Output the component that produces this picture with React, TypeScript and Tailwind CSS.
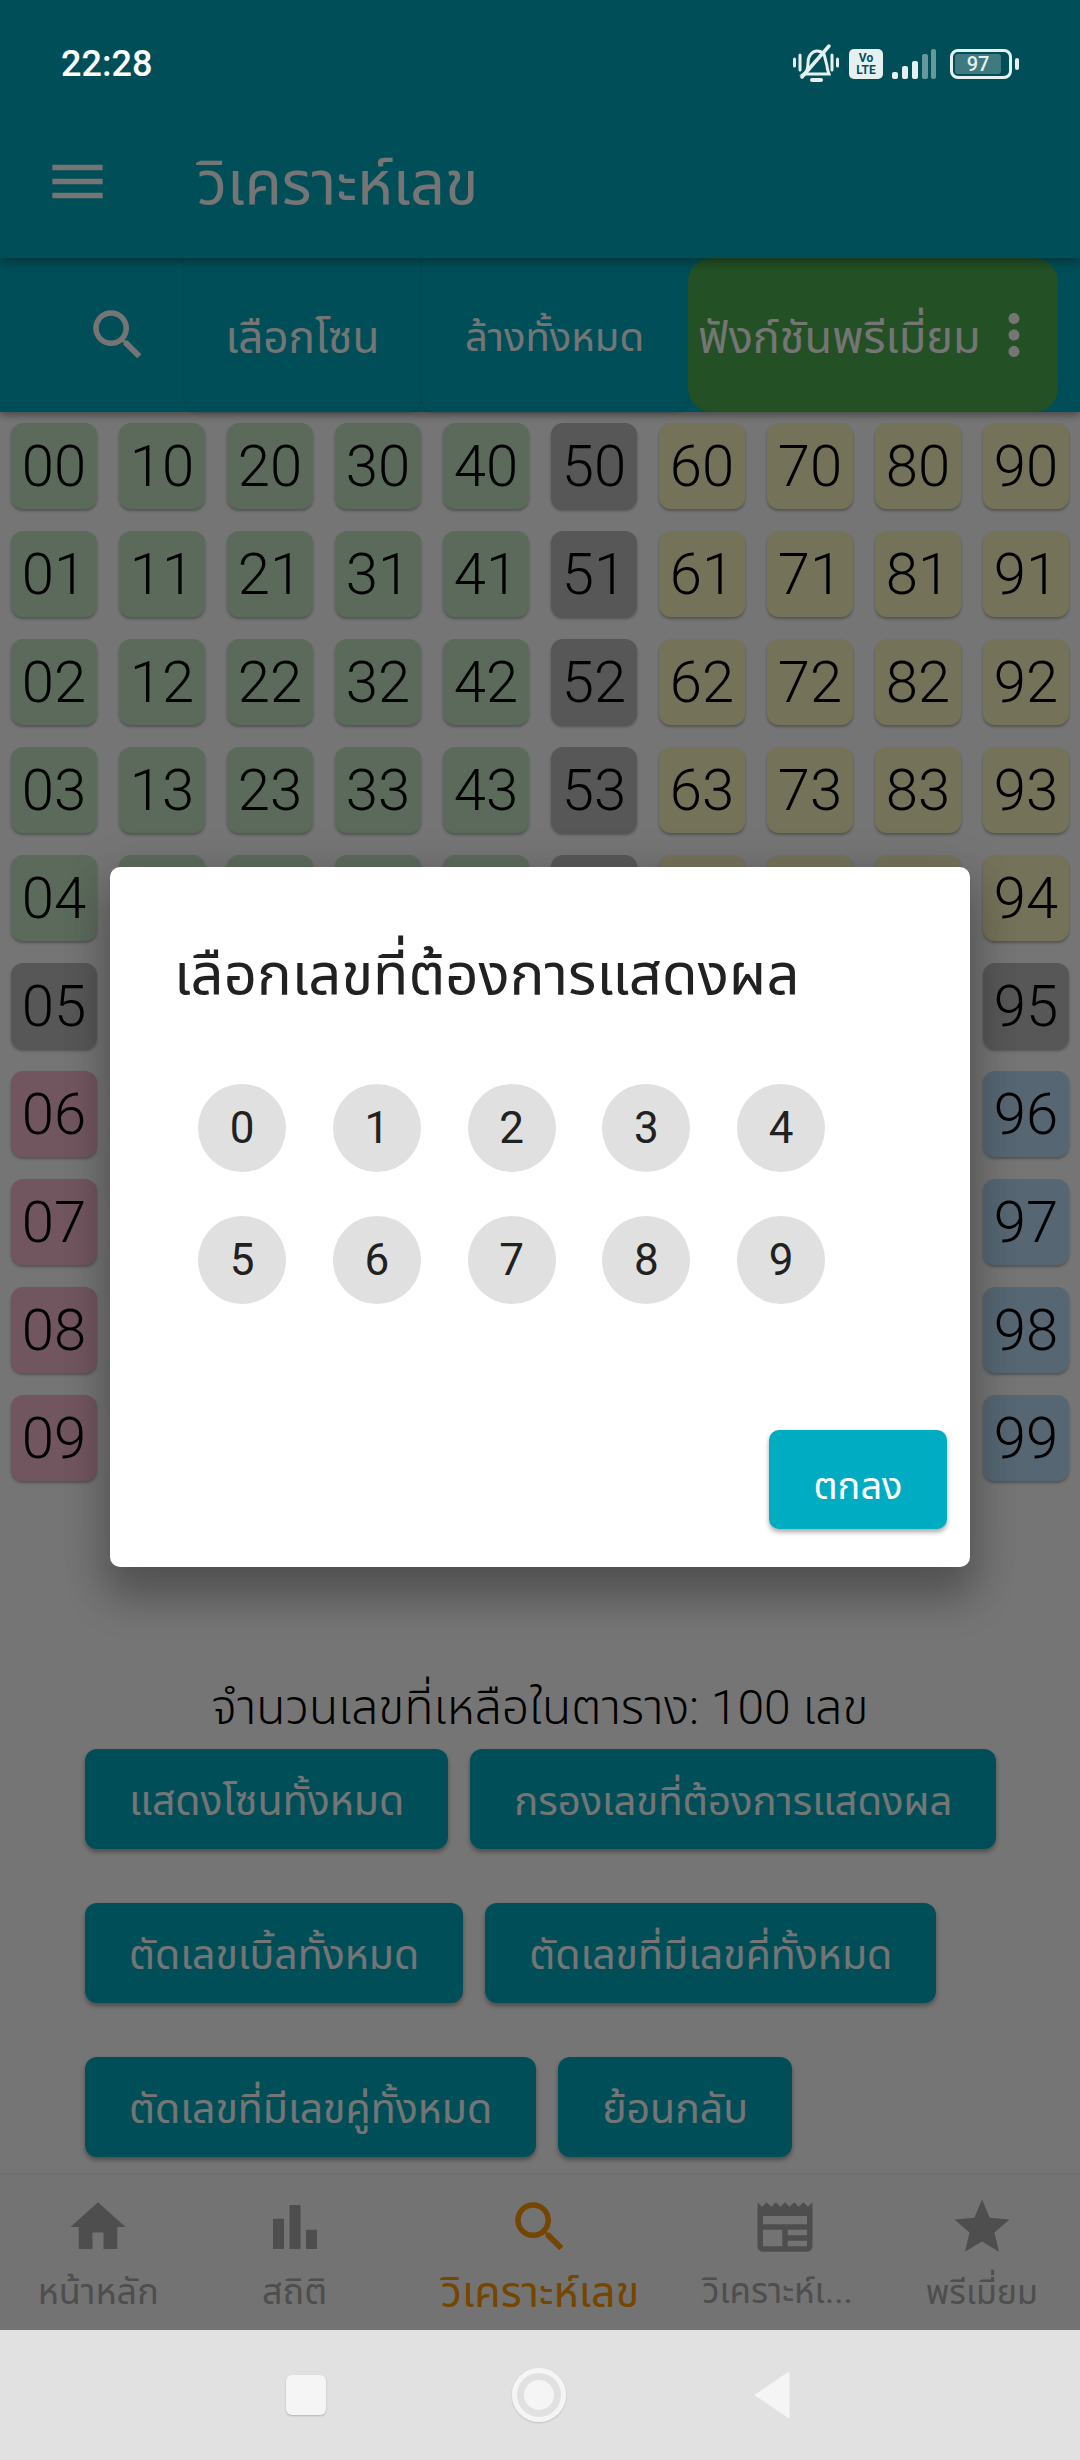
import { MdHome, MdMenu, MdMoreVert, MdSearch, MdStar } from "react-icons/md";

const FONT = "font-['Roboto','Noto_Sans_Thai','Noto_Sans','DejaVu_Sans',sans-serif]";

const cellColor = (col: number, row: number) => {
  if (col === 5 || row === 5) return "bg-[#bdbdbd]";
  if (row < 5) return col < 5 ? "bg-[#c8e6c9]" : "bg-[#fff9c4]";
  return col < 5 ? "bg-[#f8bbd0]" : "bg-[#bbdefb]";
};

function NumberGrid() {
  const rows = Array.from({ length: 10 }, (_, r) => r);
  const cols = Array.from({ length: 10 }, (_, c) => c);
  return (
    <div className="grid grid-cols-10 gap-[22px] px-[11px] pt-[11px]">
      {rows.map((r) =>
        cols.map((c) => (
          <div
            key={`${c}${r}`}
            className={`h-[86px] rounded-[12px] flex items-center justify-center text-[58px] font-light text-black shadow-[0_2px_3px_rgba(0,0,0,0.3)] ${cellColor(c, r)}`}
          >
            {c}
            {r}
          </div>
        )),
      )}
    </div>
  );
}

function ActionButton({ label, small }: { label: string; small?: boolean }) {
  return (
    <button
      className={`h-[100px] shrink-0 whitespace-nowrap px-[44px] pt-[5px] rounded-[12px] bg-[#00acc1] text-white leading-[95px] shadow-[0_3px_5px_rgba(0,0,0,0.35)] ${small ? "text-[40px]" : "text-[41px]"}`}
    >
      {label}
    </button>
  );
}

function StatusIcons() {
  return (
    <div className="flex items-center text-[#e6f0f1]">
      <svg width="46" height="40" viewBox="0 0 46 40" fill="none" stroke="currentColor" strokeWidth="3" strokeLinecap="round">
        <path d="M1.5 15v7M7 11v15M39 11v15M44.5 15v7" />
        <path d="M11 30c3-2 4-5 4-11 0-7 4-12 9-12 3 0 5 1 7 3l3 12c0 3 1 5 2 8z" />
        <path d="M19 36h9" strokeWidth="4" />
        <path d="M9 33L36 2" strokeWidth="3.5" />
      </svg>
      <div className="ml-[10px] w-[34px] h-[30px] rounded-[5px] bg-[#e6f0f1] flex flex-col items-center justify-center text-[#00505a] text-[12px] leading-[12px] font-bold">
        <span>Vo</span>
        <span>LTE</span>
      </div>
      <svg width="44" height="30" viewBox="0 0 44 30" fill="currentColor" className="ml-[9px]">
        <rect x="0" y="23" width="6" height="7" rx="2" />
        <rect x="10" y="17" width="6" height="13" rx="2" />
        <rect x="20" y="12" width="6" height="18" rx="2" />
        <rect x="30" y="5" width="6" height="25" rx="2" opacity="0.45" />
        <rect x="39" y="0" width="5" height="30" rx="2" opacity="0.45" />
      </svg>
      <div className="ml-[14px] flex items-center gap-[3px]">
        <div className="w-[62px] h-[30px] rounded-[8px] border-[3px] border-[#e6f0f1] p-[2px]">
          <div className="w-[46px] h-full rounded-[3px] bg-[#3e7a80] flex items-center justify-center text-[20px] text-[#e6f0f1] font-medium">
            97
          </div>
        </div>
        <div className="w-[4px] h-[12px] rounded-full bg-[#e6f0f1]" />
      </div>
    </div>
  );
}

function NavItem({
  label,
  active,
  labelClass,
  children,
}: {
  label: string;
  active?: boolean;
  labelClass: string;
  children: React.ReactNode;
}) {
  return (
    <div className={`flex flex-col items-center pt-[20px] ${active ? "text-[#ff9800]" : "text-[#ababab]"}`}>
      <div className="h-[66px] flex items-center justify-center">{children}</div>
      <span className={`mt-[8px] whitespace-nowrap leading-[48px] ${labelClass}`}>{label}</span>
    </div>
  );
}

export default function App() {
  const digits = ["0", "1", "2", "3", "4", "5", "6", "7", "8", "9"];
  return (
    <div className={`relative w-[1080px] h-[2460px] overflow-hidden bg-white flex flex-col ${FONT}`}>
      {/* app bar */}
      <header className="relative h-[258px] bg-[#00acc1] shrink-0 shadow-[0_4px_10px_rgba(0,0,0,0.35)]">
        <div className="relative z-20 h-[110px] flex items-center justify-between pl-[61px] pr-[61px] pt-[18px]">
          <span className="text-white text-[36px] font-medium">22:28</span>
          <StatusIcons />
        </div>
        <div className="h-[148px] flex items-center text-white">
          <MdMenu size={67} className="ml-[44px] -mt-[6px]" />
          <span className="ml-[86px] text-[61px]">วิเคราะห์เลข</span>
        </div>
      </header>

      {/* toolbar */}
      <div className="h-[154px] shrink-0 flex bg-[#00acc1] text-white shadow-[0_3px_8px_rgba(0,0,0,0.4)]">
        <div className="w-[184px] flex items-center justify-end pr-[33px]">
          <MdSearch size={66} />
        </div>
        <div className="w-[237px] pt-[5px] flex items-center justify-center text-[44px] rounded-b-[14px] shadow-[0_1px_3px_rgba(0,0,0,0.15)]">เลือกโซน</div>
        <div className="w-[267px] pt-[5px] flex items-center justify-center text-[40px] rounded-b-[14px] shadow-[0_1px_3px_rgba(0,0,0,0.15)]">ล้างทั้งหมด</div>
        <div className="w-[370px] rounded-[24px] bg-[#4caf50] flex items-center pl-[10px] text-[45px]">
          <span className="whitespace-nowrap pt-[5px]">ฟังก์ชันพรีเมี่ยม</span>
          <MdMoreVert size={66} className="ml-auto mr-[11px]" />
        </div>
      </div>

      {/* content */}
      <main className="flex-1">
        <NumberGrid />
        <p className="mt-[198px] text-center text-black text-[48px] leading-[58px] font-light">จำนวนเลขที่เหลือในตาราง: 100 เลข</p>
        <div className="mt-[12px] px-[85px] flex flex-col gap-[54px]">
          <div className="flex gap-[22px]">
            <ActionButton label="แสดงโซนทั้งหมด" />
            <ActionButton label="กรองเลขที่ต้องการแสดงผล" small />
          </div>
          <div className="flex gap-[22px]">
            <ActionButton label="ตัดเลขเบิ้ลทั้งหมด" />
            <ActionButton label="ตัดเลขที่มีเลขคี่ทั้งหมด" />
          </div>
          <div className="flex gap-[22px]">
            <ActionButton label="ตัดเลขที่มีเลขคู่ทั้งหมด" />
            <ActionButton label="ย้อนกลับ" />
          </div>
        </div>
      </main>

      {/* bottom nav */}
      <nav className="h-[157px] shrink-0 bg-[#fafafa] border-t border-[#eeeeee] grid grid-cols-[1fr_1fr_1.5fr_1fr_1fr]">
        <NavItem label="หน้าหลัก" labelClass="text-[36px]">
          <MdHome size={66} />
        </NavItem>
        <NavItem label="สถิติ" labelClass="text-[36px]">
          <svg width="66" height="66" viewBox="0 0 24 24" fill="currentColor">
            <path d="M4 9h4v11H4zM16 13h4v7h-4zM10 4h4v16h-4z" />
          </svg>
        </NavItem>
        <NavItem label="วิเคราะห์เลข" active labelClass="text-[43px]">
          <MdSearch size={66} />
        </NavItem>
        <NavItem label="วิเคราะห์เ..." labelClass="text-[35px] pr-[16px]">
          <svg width="66" height="66" viewBox="0 0 24 24" fill="currentColor">
            <path d="M22 3l-1.67 1.67L18.67 3 17 4.67 15.33 3l-1.66 1.67L12 3l-1.67 1.67L8.67 3 7 4.67 5.33 3 3.67 4.67 2 3v16c0 1.1.9 2 2 2h16c1.1 0 2-.9 2-2V3zM11 19H4v-6h7v6zm9 0h-7v-2h7v2zm0-4h-7v-2h7v2zm0-4H4V8h16v3z" />
          </svg>
        </NavItem>
        <NavItem label="พรีเมี่ยม" labelClass="text-[34px]">
          <MdStar size={66} />
        </NavItem>
      </nav>

      {/* system nav */}
      <div className="relative z-20 h-[130px] shrink-0 bg-[#e1e1e1] flex items-center">
        <div className="w-[40px] h-[40px] ml-[286px] rounded-[6px] bg-[#f5f5f5] shadow-[0_1px_2px_rgba(0,0,0,0.2)]" />
        <div className="w-[54px] h-[54px] ml-[186px] rounded-full border-[5px] border-[#f5f5f5] flex items-center justify-center shadow-[0_1px_2px_rgba(0,0,0,0.15)]">
          <div className="w-[30px] h-[30px] rounded-full bg-[#f5f5f5]" />
        </div>
        <svg width="36" height="48" viewBox="0 0 36 48" className="ml-[188px]">
          <path d="M35 1L1 24l34 23z" fill="#f5f5f5" stroke="#f5f5f5" strokeLinejoin="round" />
        </svg>
      </div>

      {/* dialog overlay */}
      <div className="absolute inset-x-0 top-0 bottom-[130px] z-10 bg-black/54 flex justify-center pt-[867px]">
        <div className="relative w-[860px] h-[700px] bg-white rounded-[10px] shadow-[0_28px_40px_4px_rgba(0,0,0,0.24),0_9px_46px_8px_rgba(0,0,0,0.1)] pl-[64px]">
          <h2 className="pt-[71px] text-[58px] leading-[72px] font-normal whitespace-nowrap text-[#212121]">เลือกเลขที่ต้องการแสดงผล</h2>
          <div className="mt-[74px] ml-[24px] grid grid-cols-[repeat(5,88px)] gap-y-[44px] gap-x-[46.75px]">
            {digits.map((d) => (
              <div key={d} className="w-[88px] h-[88px] rounded-full bg-[#e0e0e0] flex items-center justify-center text-[44px] text-[#212121]">
                {d}
              </div>
            ))}
          </div>
          <button className="absolute right-[23px] bottom-[38px] w-[178px] h-[99px] rounded-[10px] bg-[#00acc1] text-white text-[38px] pt-[14px] shadow-[0_3px_5px_rgba(0,0,0,0.35)]">
            ตกลง
          </button>
        </div>
      </div>
    </div>
  );
}
